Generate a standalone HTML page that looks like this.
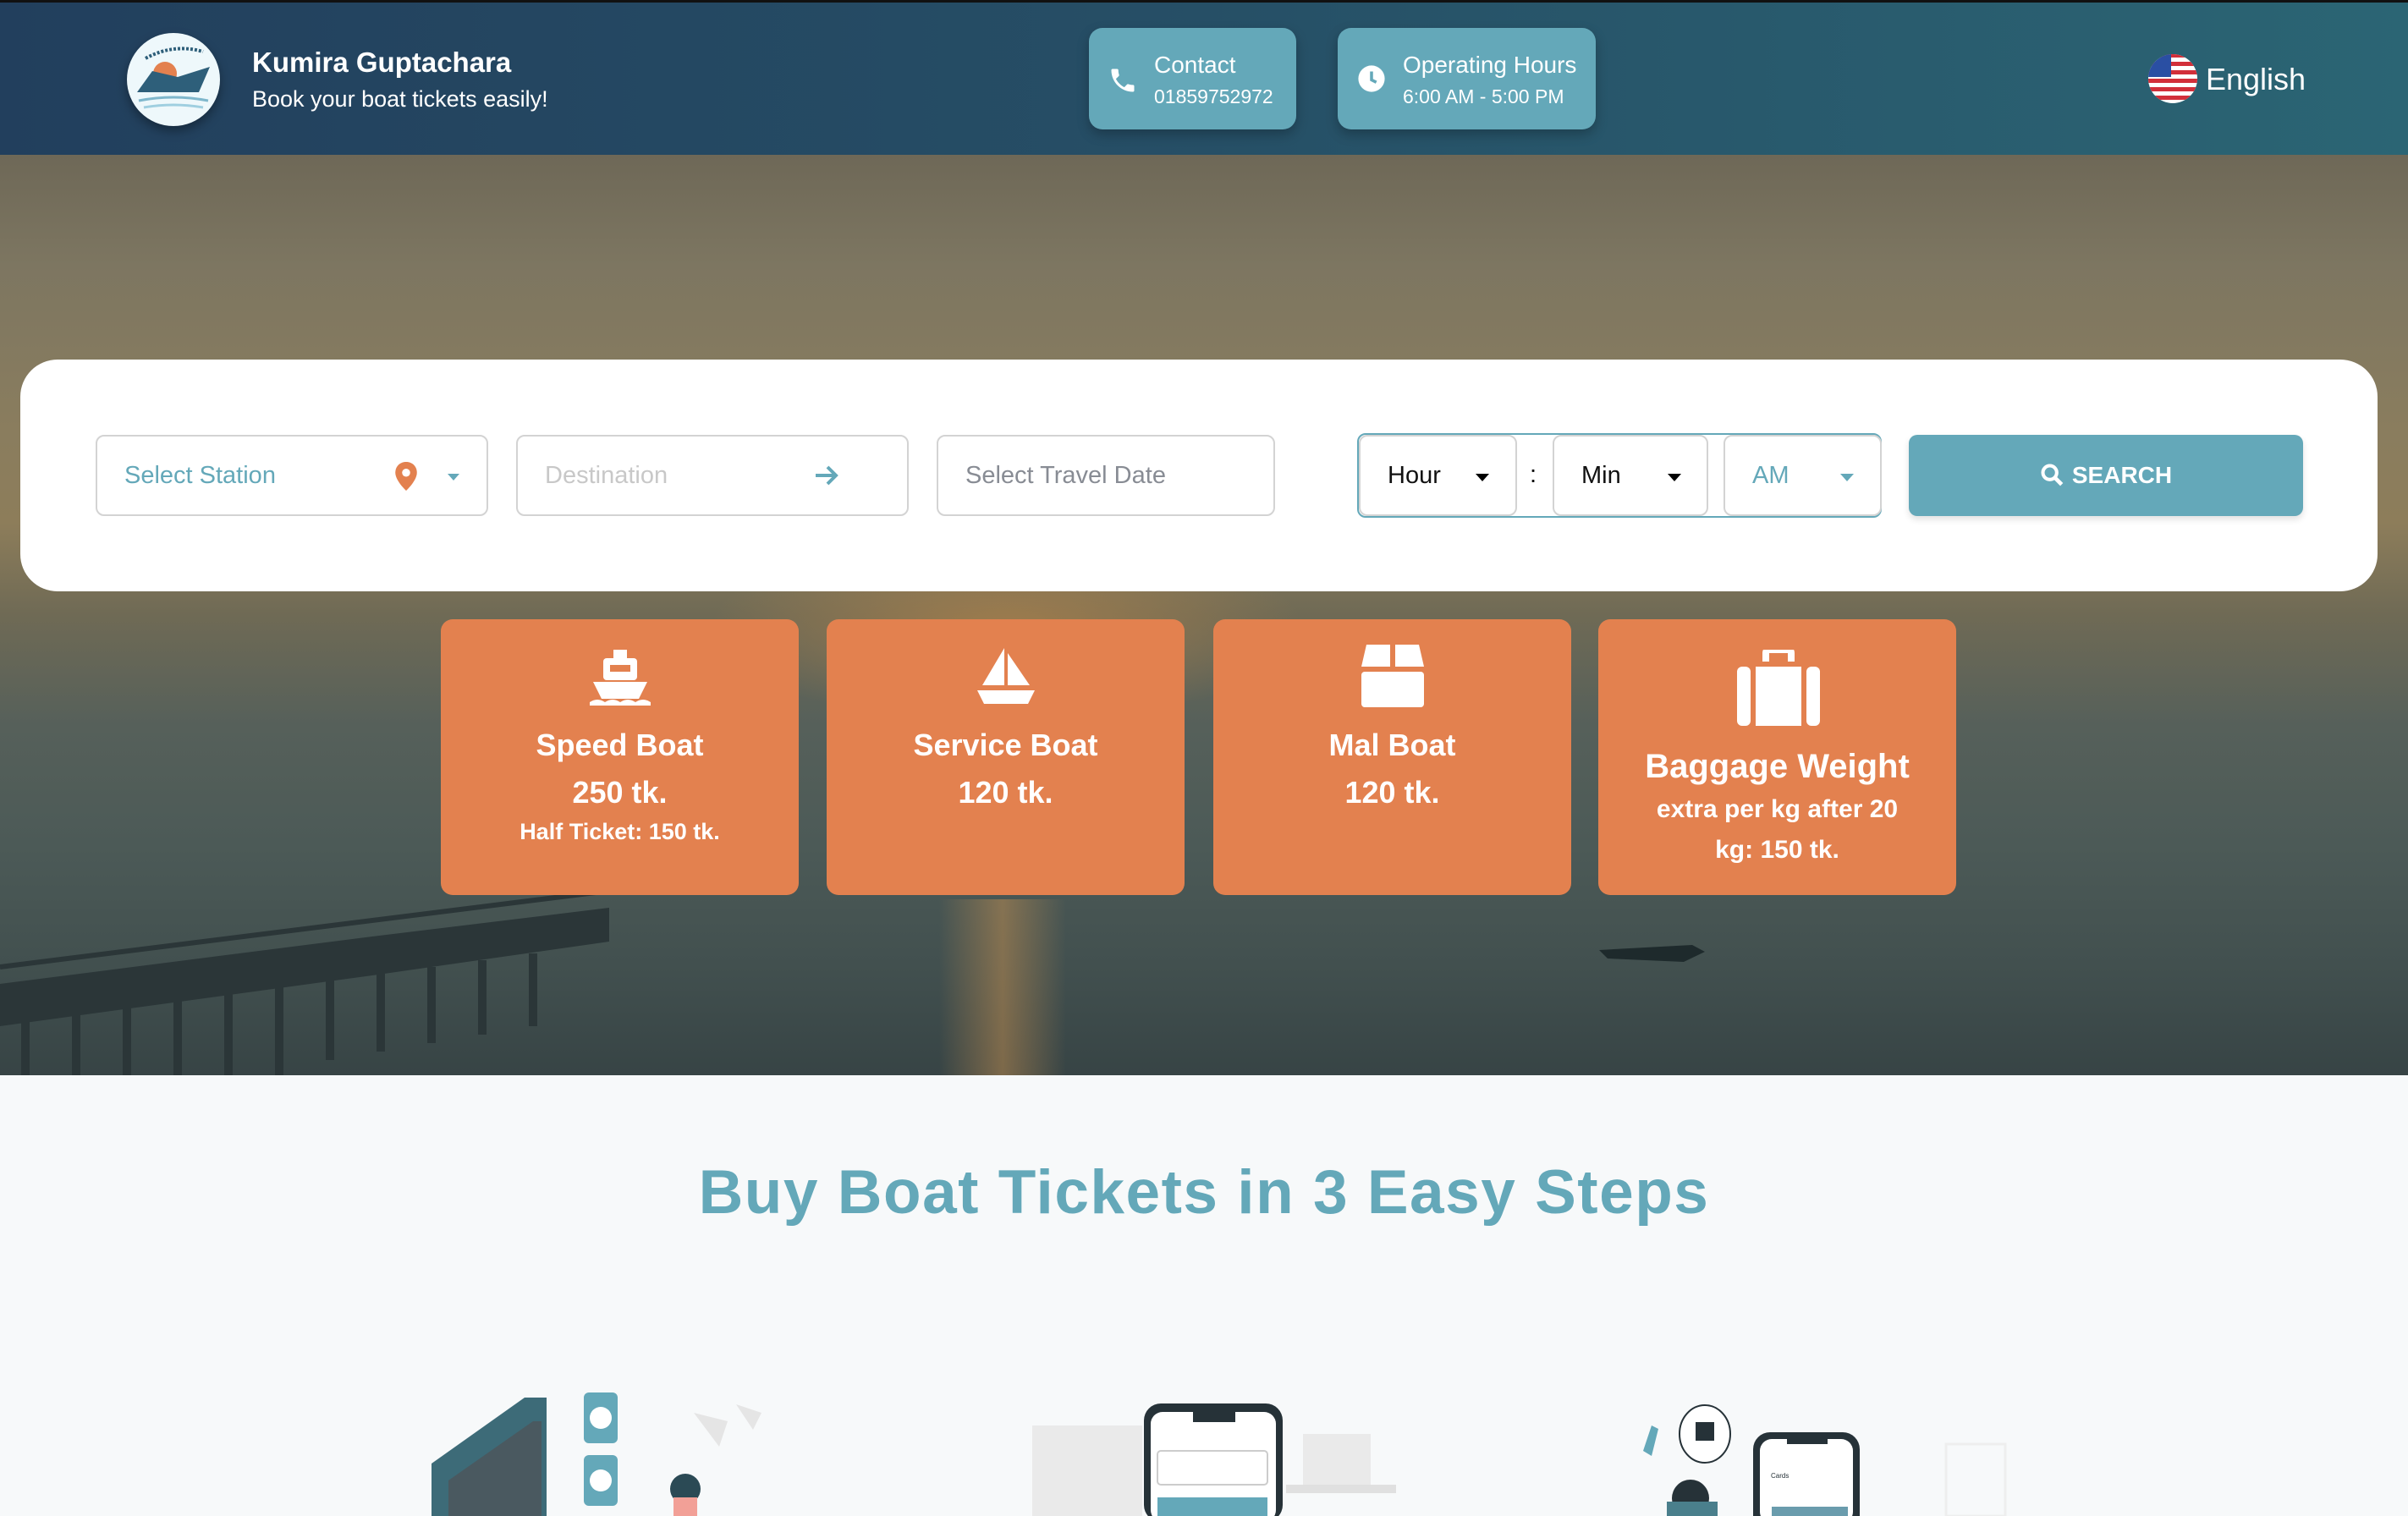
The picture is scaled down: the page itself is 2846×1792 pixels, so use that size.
<!DOCTYPE html>
<html><head><meta charset="utf-8"><style>
*{box-sizing:border-box;margin:0;padding:0}
body{width:2846px;height:1792px;overflow:hidden;font-family:"Liberation Sans",sans-serif;background:#f7f9fa;position:relative}
.abs{position:absolute}
header{position:absolute;left:0;top:0;width:2846px;height:183px;background:linear-gradient(90deg,#223f5d 0%,#264f66 50%,#2b6574 100%);border-top:3px solid #111}
.hero{position:absolute;left:0;top:183px;width:2846px;height:1088px;overflow:hidden;
background:
radial-gradient(ellipse 500px 160px at 1190px 560px,rgba(200,140,70,.55),rgba(0,0,0,0) 70%),
linear-gradient(180deg,#6e6857 0%,#7d7661 12%,#8a7d5e 30%,#8d7d5a 40%,#6f6a55 50%,#56605a 62%,#4c5a57 75%,#42504f 88%,#374445 100%)}
.box{position:absolute;background:#64a8b9;border-radius:16px;color:#fff;box-shadow:0 6px 14px rgba(0,0,0,.25)}
.card{position:absolute;top:732px;width:423px;height:326px;background:#e3814f;border-radius:14px;color:#fff;text-align:center;font-weight:bold}
.field{position:absolute;top:514px;height:96px;border:2px solid #d3d3d3;border-radius:10px;font-size:29px;line-height:92px;padding-left:32px}
.tri{position:absolute;width:0;height:0;border-left:8px solid transparent;border-right:8px solid transparent;border-top:9px solid #000}
</style></head><body>
<header>
 <div class="abs" style="left:150px;top:36px;width:110px;height:110px;border-radius:50%;background:#eef8fb;box-shadow:0 6px 12px rgba(0,0,0,.35);overflow:hidden">
  <svg width="110" height="110" viewBox="0 0 110 110"><circle cx="45" cy="48" r="14" fill="#e3814f"/><path d="M12 70 L30 45 L60 52 L98 40 L85 70 Z" fill="#2e5f7a"/><path d="M14 80 Q55 72 96 80" stroke="#7fb7cc" stroke-width="3" fill="none"/><path d="M20 88 Q55 82 90 88" stroke="#9fcfe0" stroke-width="3" fill="none"/><path d="M22 30 Q55 12 90 22" stroke="#2e5f7a" stroke-width="4" fill="none" stroke-dasharray="3 2"/></svg>
 </div>
 <div class="abs" style="left:298px;top:52px;color:#fff;font-size:33px;font-weight:bold">Kumira Guptachara</div>
 <div class="abs" style="left:298px;top:99px;color:#fff;font-size:27px">Book your boat tickets easily!</div>
 <div class="box" style="left:1287px;top:30px;width:245px;height:120px">
  <svg class="abs" style="left:22px;top:42px" width="36" height="40" viewBox="0 0 24 24"><path fill="#fff" d="M6.6 10.8c1.4 2.8 3.8 5.1 6.6 6.6l2.2-2.2c.3-.3.7-.4 1-.2 1.1.4 2.3.6 3.6.6.6 0 1 .4 1 1V20c0 .6-.4 1-1 1C10.6 21 3 13.4 3 4c0-.6.4-1 1-1h3.5c.6 0 1 .4 1 1 0 1.3.2 2.5.6 3.6.1.3 0 .7-.2 1z"/></svg>
  <div class="abs" style="left:77px;top:28px;font-size:28px">Contact</div>
  <div class="abs" style="left:77px;top:68px;font-size:23px">01859752972</div>
 </div>
 <div class="box" style="left:1581px;top:30px;width:305px;height:120px">
  <svg class="abs" style="left:23px;top:43px" width="34" height="34" viewBox="0 0 24 24"><circle cx="12" cy="12" r="11" fill="#fff"/><path d="M12 6v7l4 2" stroke="#64a8b9" stroke-width="2.5" fill="none"/></svg>
  <div class="abs" style="left:77px;top:28px;font-size:28px">Operating Hours</div>
  <div class="abs" style="left:77px;top:68px;font-size:23px">6:00 AM - 5:00 PM</div>
 </div>
 <svg class="abs" style="left:2538px;top:60px" width="60" height="60" viewBox="0 0 60 60"><defs><clipPath id="c"><circle cx="30" cy="30" r="29"/></clipPath></defs><g clip-path="url(#c)"><rect width="60" height="60" fill="#fff"/><g fill="#d22f3a"><rect y="0" width="60" height="5"/><rect y="10" width="60" height="5"/><rect y="20" width="60" height="5"/><rect y="30" width="60" height="5"/><rect y="40" width="60" height="5"/><rect y="50" width="60" height="5"/></g><rect width="28" height="28" fill="#2a4fa3"/></g></svg>
 <div class="abs" style="left:2607px;top:70px;color:#fff;font-size:36px">English</div>
</header>
<div class="hero">
 <div class="abs" style="left:1110px;top:880px;width:150px;height:208px;background:linear-gradient(90deg,rgba(0,0,0,0),rgba(210,150,80,.45),rgba(0,0,0,0))"></div>
 <svg class="abs" style="left:0;top:860px" width="760" height="228" viewBox="0 0 760 228">
  <path d="M0 120 L440 64 L720 30 L720 70 L440 110 L0 170 Z" fill="#2b3638"/>
  <g stroke="#2b3638" stroke-width="10">
   <line x1="30" y1="160" x2="30" y2="228"/><line x1="90" y1="152" x2="90" y2="228"/><line x1="150" y1="145" x2="150" y2="228"/><line x1="210" y1="137" x2="210" y2="228"/><line x1="270" y1="130" x2="270" y2="228"/><line x1="330" y1="122" x2="330" y2="228"/><line x1="390" y1="115" x2="390" y2="210"/><line x1="450" y1="108" x2="450" y2="200"/><line x1="510" y1="100" x2="510" y2="190"/><line x1="570" y1="92" x2="570" y2="180"/><line x1="630" y1="84" x2="630" y2="170"/>
  </g>
  <path d="M0 100 L720 10" stroke="#2b3638" stroke-width="6"/>
 </svg>
 <svg class="abs" style="left:1890px;top:920px" width="130" height="40" viewBox="0 0 130 40"><path d="M0 20 L110 14 L125 22 L100 34 L10 30 Z" fill="#1e2a2c"/></svg>
</div>
<div class="abs" style="left:24px;top:425px;width:2786px;height:274px;background:#fff;border-radius:44px"></div>
<div class="field" style="left:113px;width:464px;color:#64a8b9">Select Station
 <svg class="abs" style="left:352px;top:30px" width="26" height="34" viewBox="0 0 24 32"><path d="M12 0C5 0 0 5 0 12c0 9 12 20 12 20s12-11 12-20C24 5 19 0 12 0z" fill="#e3814f"/><circle cx="12" cy="12" r="4.5" fill="#fff"/></svg>
 <div class="tri" style="left:414px;top:44px;border-top-color:#64a8b9;border-left-width:7px;border-right-width:7px;border-top-width:8px"></div>
</div>
<div class="field" style="left:610px;width:464px;color:#c8c8c8">Destination
 <svg class="abs" style="left:350px;top:32px" width="32" height="28" viewBox="0 0 32 28"><path d="M2 14h24M16 4l10 10-10 10" stroke="#64a8b9" stroke-width="4" fill="none"/></svg>
</div>
<div class="field" style="left:1107px;width:400px;color:#888c94">Select Travel Date</div>
<div class="abs" style="left:1604px;top:512px;width:620px;height:100px;border:2px solid #64a8b9;border-radius:10px"></div>
<div class="field" style="left:1606px;width:187px;color:#111">Hour<div class="tri" style="left:136px;top:44px"></div></div>
<div class="abs" style="left:1808px;top:545px;font-size:29px">:</div>
<div class="field" style="left:1835px;width:184px;color:#111">Min<div class="tri" style="left:134px;top:44px"></div></div>
<div class="field" style="left:2037px;width:187px;color:#64a8b9">AM<div class="tri" style="left:136px;top:44px;border-top-color:#64a8b9"></div></div>
<div class="abs" style="left:2256px;top:514px;width:466px;height:96px;background:#64a8b9;border-radius:10px;color:#fff;font-size:28px;font-weight:bold;line-height:96px;text-align:center;box-shadow:0 4px 8px rgba(0,0,0,.12)">
 <svg style="vertical-align:-4px;margin-right:10px" width="28" height="28" viewBox="0 0 24 24"><circle cx="10" cy="10" r="7" stroke="#fff" stroke-width="3.5" fill="none"/><path d="M15 15l7 7" stroke="#fff" stroke-width="4"/></svg>SEARCH</div>

<div class="card" style="left:521px">
 <svg class="abs" style="left:176px;top:36px" width="72" height="66" viewBox="0 0 72 66"><rect x="28" y="0" width="16" height="10" fill="#fff"/><rect x="16" y="10" width="40" height="26" rx="4" fill="#fff"/><rect x="24" y="18" width="24" height="8" fill="#e3814f"/><path d="M4 38 L68 38 L58 58 L14 58 Z" fill="#fff"/><path d="M0 62 Q9 56 18 62 Q27 56 36 62 Q45 56 54 62 Q63 56 72 62 L72 66 L0 66Z" fill="#fff"/></svg>
 <div class="abs" style="left:0;right:0;top:128px;font-size:36px">Speed Boat</div>
 <div class="abs" style="left:0;right:0;top:184px;font-size:36px">250 tk.</div>
 <div class="abs" style="left:0;right:0;top:236px;font-size:27px">Half Ticket: 150 tk.</div>
</div>
<div class="card" style="left:977px">
 <svg class="abs" style="left:176px;top:34px" width="72" height="66" viewBox="0 0 72 66"><path d="M34 0 L34 44 L8 44 Z" fill="#fff"/><path d="M38 6 L64 44 L38 44 Z" fill="#fff"/><path d="M2 50 L70 50 L62 66 L10 66 Z" fill="#fff"/></svg>
 <div class="abs" style="left:0;right:0;top:128px;font-size:36px">Service Boat</div>
 <div class="abs" style="left:0;right:0;top:184px;font-size:36px">120 tk.</div>
</div>
<div class="card" style="left:1434px">
 <svg class="abs" style="left:175px;top:30px" width="74" height="74" viewBox="0 0 74 74"><path d="M6 0 H34 V26 H0 Z" fill="#fff"/><path d="M40 0 H68 L74 26 H40 Z" fill="#fff"/><rect x="0" y="32" width="74" height="42" rx="4" fill="#fff"/></svg>
 <div class="abs" style="left:0;right:0;top:128px;font-size:36px">Mal Boat</div>
 <div class="abs" style="left:0;right:0;top:184px;font-size:36px">120 tk.</div>
</div>
<div class="card" style="left:1889px">
 <svg class="abs" style="left:164px;top:36px" width="98" height="90" viewBox="0 0 98 90"><path d="M34 14 V4 Q34 0 38 0 H60 Q64 0 64 4 V14" stroke="#fff" stroke-width="8" fill="none"/><rect x="0" y="20" width="16" height="70" rx="6" fill="#fff"/><rect x="22" y="20" width="54" height="70" fill="#fff"/><rect x="82" y="20" width="16" height="70" rx="6" fill="#fff"/></svg>
 <div class="abs" style="left:0;right:0;top:152px;font-size:40px">Baggage Weight</div>
 <div class="abs" style="left:0;right:0;top:208px;font-size:30px">extra per kg after 20</div>
 <div class="abs" style="left:0;right:0;top:256px;font-size:30px">kg: 150 tk.</div>
</div>

<div class="abs" style="left:0;width:2846px;top:1368px;text-align:center;color:#64a8b9;font-size:73px;font-weight:bold;letter-spacing:1.5px">Buy Boat Tickets in 3 Easy Steps</div>

<svg class="abs" style="left:500px;top:1640px" width="440" height="152" viewBox="0 0 440 152"><path d="M10 90 L120 12 L146 12 L146 152 L10 152 Z" fill="#3d6b78"/><path d="M30 110 L130 40 L140 40 L140 152 L30 152Z" fill="#4a5960"/><rect x="190" y="6" width="40" height="60" rx="6" fill="#64a8b9"/><circle cx="210" cy="36" r="13" fill="#fff"/><rect x="190" y="80" width="40" height="60" rx="6" fill="#64a8b9"/><circle cx="210" cy="110" r="13" fill="#fff"/><circle cx="310" cy="120" r="18" fill="#2b4a55"/><rect x="296" y="130" width="28" height="22" fill="#f2a097"/><path d="M320 30 l30 40 l10 -30z M370 20 l30 10 l-10 20z" fill="#e5e5e5"/></svg>
<svg class="abs" style="left:1210px;top:1655px" width="440" height="137" viewBox="0 0 440 137"><rect x="10" y="30" width="130" height="107" fill="#eaeaea"/><rect x="142" y="4" width="164" height="140" rx="20" fill="#263238"/><rect x="150" y="14" width="148" height="130" rx="14" fill="#fff"/><rect x="200" y="14" width="50" height="12" fill="#263238"/><rect x="158" y="60" width="130" height="40" rx="4" fill="none" stroke="#ccc" stroke-width="2"/><rect x="158" y="115" width="130" height="22" fill="#64a8b9"/><rect x="330" y="40" width="80" height="60" fill="#eaeaea"/><rect x="310" y="100" width="130" height="10" fill="#e0e0e0"/></svg>
<svg class="abs" style="left:1930px;top:1655px" width="450" height="137" viewBox="0 0 450 137"><ellipse cx="85" cy="40" rx="30" ry="34" fill="#fff" stroke="#263238" stroke-width="2"/><rect x="74" y="26" width="22" height="22" fill="#263238"/><path d="M12 60 l10 -30 l8 4 l-8 32z" fill="#64a8b9"/><circle cx="68" cy="116" r="22" fill="#263238"/><rect x="40" y="120" width="60" height="17" fill="#4a7f8c"/><rect x="142" y="38" width="126" height="120" rx="20" fill="#263238"/><rect x="150" y="46" width="110" height="100" rx="14" fill="#fff"/><rect x="182" y="40" width="48" height="12" fill="#263238"/><text x="163" y="92" font-size="8" font-family="Liberation Sans" fill="#263238">Cards</text><rect x="164" y="126" width="90" height="12" fill="#6a9cad"/><rect x="370" y="52" width="70" height="85" fill="none" stroke="#eee" stroke-width="3"/></svg>
</body></html>
